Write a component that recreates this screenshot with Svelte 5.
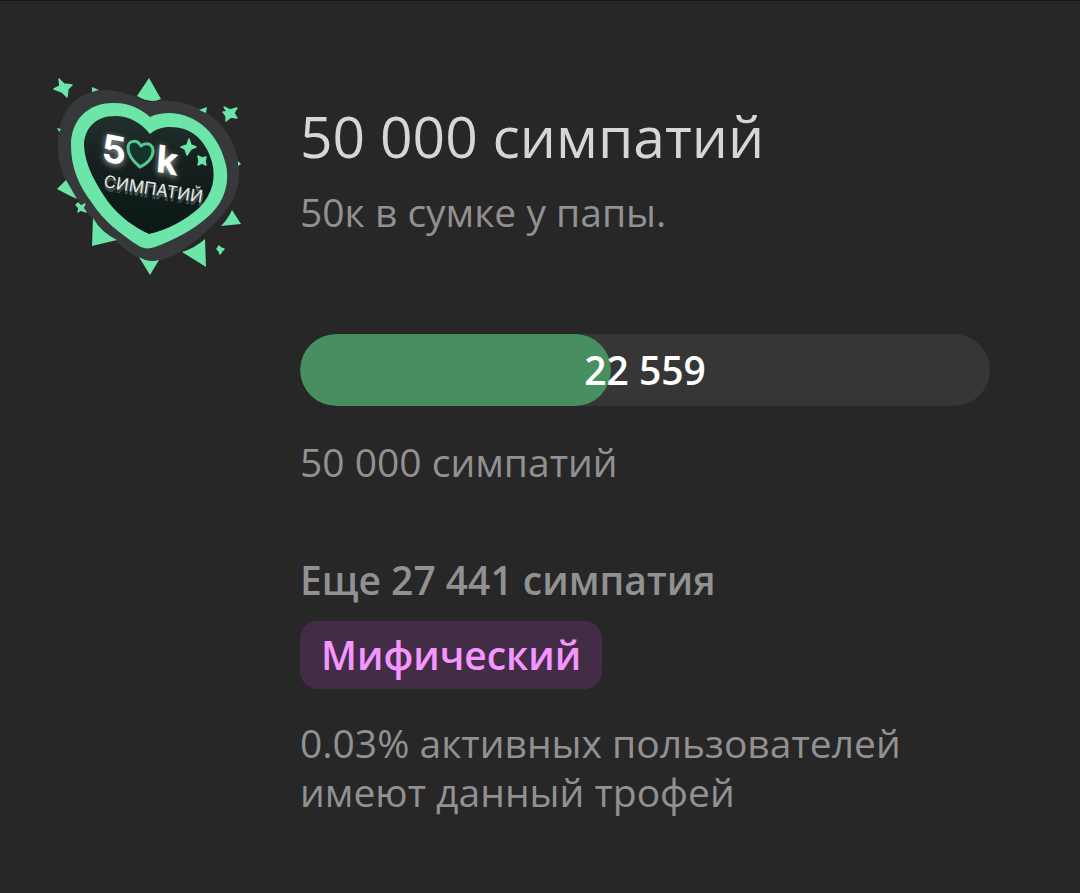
<script>
  const goal = 50000;
  const current = 22559;
  const format = (n) => String(n).replace(/\B(?=(\d{3})+$)/g, '\u00a0');
  const percent = (current / goal) * 100;
</script>

<main class="trophy">
  <svg class="icon" viewBox="50 75 200 200" role="img" aria-label="50k симпатий">
    <defs>
      <linearGradient id="heart-fill" x1="0" y1="0" x2="0" y2="1">
        <stop offset="0" stop-color="#23302c" />
        <stop offset="0.4" stop-color="#16201e" />
        <stop offset="1" stop-color="#0b1816" />
      </linearGradient>
      <filter id="glow" x="-30%" y="-30%" width="160%" height="160%">
        <feGaussianBlur stdDeviation="3" />
      </filter>
    </defs>
    <path
      fill="#36383a"
      d="M58 143C58 112 76 91 105 90C122 90 135 97 148 102C158 100 168 100 178 102C207 107 229 126 237 155C243 181 236 202 218 220C204 234 190 247 174 255C160 262 148 265 138 258C114 242 92 221 78 200C64 182 57 163 58 143Z"
    />
    <path
      fill="#6be5a8"
      d="M150 117C141 109 129 103 115 103C88 102 71 120 71 145C71 168 79 186 92 203C103 220 120 234 139 246C144 249 149 249 155 247C174 240 195 229 210 215C224 202 230 183 226 165C219 134 197 114 170 113C163 113 156 114 150 117Z"
    />
    <path
      fill="url(#heart-fill)"
      d="M150 134C141 123 130 116 115 116C95 116 84 129 84 146C85 165 96 185 109 203C120 217 134 227 149 234C167 230 186 220 200 207C213 193 216 178 212 162C205 138 190 127 170 127C162 127 156 129 150 134Z"
    />
    <g fill="#6be5a8">
      <path d="M92 87L99 90L92 92Z" />
      <path d="M57 128L61 129L59 132Z" />
      <path d="M149 78L161 99Q150 104 137 96Z" />
      <path d="M207 107L206 113L199 110Z" />
      <path d="M238 161L241 164L238 166Z" />
      <path d="M66 180L77 199Q68 195 57 189Z" />
      <path d="M93 218Q101 232 117 240L92 246Z" />
      <path d="M139 257Q149 263 159 260L150 275Z" />
      <path d="M205 239L206 267L182 252Q195 248 205 239Z" />
      <path d="M232 210L241 224L221 226Q228 219 232 210Z" />
      <g stroke="#6be5a8" stroke-width="1.4" stroke-linejoin="round">
        <path d="M59 79L64 84L72 85L68 89L67 97L62 92L54 89L60 86Z" />
        <path d="M224 107L230 110L237 108L234 113L237 118L231 117L226 121L226 116L223 112L227 112Z" />
        <path d="M78 203L81 206L85 204L83 208L86 212L81 210L78 212L79 208L76 205Z" />
        <path d="M219 246L221 248L224 249L222 251L220 254L219 251L217 249Z" />
        <path d="M189 139L191 145L196 147L191 149L187 155L185 149L181 147L187 145Z" />
        <path d="M198 156L202 158L206 157L205 161L206 165L202 163L198 165L199 161Z" />
      </g>
    </g>
    <g class="lettering">
      <g class="haze" filter="url(#glow)" transform="translate(102 161) rotate(4) skewY(7)">
        <text class="number" x="-1" y="2">5</text>
        <text class="number" x="54" y="2">k</text>
      </g>
      <g transform="translate(102 161) rotate(4) skewY(7)">
        <text class="number" x="-1" y="0">5</text>
        <text class="number" x="54" y="0">k</text>
      </g>
      <g transform="translate(103 187) rotate(9)">
        <text class="ghost" x="1" y="3">СИМПАТИЙ</text>
        <text class="word" x="0" y="0">СИМПАТИЙ</text>
      </g>
    </g>
    <path
      d="M141 146C137 139 128 140 128 148C128 156 134 162 140 167C147 164 153 158 153 151C153 143 145 142 141 146Z"
      fill="#14332a"
      stroke="#55c690"
      stroke-width="3"
      stroke-linejoin="round"
    />
  </svg>

  <section class="details">
    <h1>{format(goal)} симпатий</h1>
    <p class="subtitle">50к в сумке у папы.</p>
    <div
      class="bar"
      role="progressbar"
      aria-label="Симпатии"
      aria-valuemin="0"
      aria-valuemax={goal}
      aria-valuenow={current}
    >
      <div class="fill" style="width: {percent}%"></div>
      <span class="value">{format(current)}</span>
    </div>
    <p class="goal">{format(goal)} симпатий</p>
    <p class="left">Еще {format(goal - current)} симпатия</p>
    <span class="rarity">Мифический</span>
    <p class="share">0.03% активных пользователей имеют данный трофей</p>
  </section>
</main>

<style>
  :global(body) {
    margin: 0;
    background: #272727;
  }

  .trophy {
    box-sizing: border-box;
    min-height: 100vh;
    display: flex;
    align-items: flex-start;
    gap: 50px;
    padding: 74px 90px 72px 50px;
    border-top: 1px solid #171717;
    background: #272727;
    color: #919191;
    font: 400 39px/49px "Open Sans", "Noto Sans", sans-serif;
  }

  .icon {
    flex: none;
    width: 200px;
    height: 200px;
    overflow: visible;
  }

  .lettering {
    font-family: Inter, sans-serif;
    fill: #fff;
  }

  .number {
    font-size: 38px;
    font-weight: 700;
  }

  .haze {
    opacity: 0.6;
  }

  .word {
    font-size: 17px;
    fill: #e4e8e7;
  }

  .ghost {
    font-size: 17px;
    fill: none;
    stroke: #4c5755;
    stroke-width: 1px;
  }

  .details {
    flex: 1;
    min-width: 0;
    display: flex;
    flex-direction: column;
    align-items: flex-start;
    padding-top: 26px;
  }

  h1,
  p {
    margin: 0;
  }

  h1 {
    color: #d6d6d6;
    font-size: 57px;
    font-weight: 400;
    line-height: 70px;
  }

  .subtitle {
    margin-top: 16px;
  }

  .bar {
    position: relative;
    align-self: stretch;
    height: 72px;
    margin-top: 98px;
    border-radius: 36px;
    overflow: hidden;
    background: #363636;
  }

  .fill {
    height: 100%;
    border-radius: 36px;
    background: #478e61;
  }

  .value {
    position: absolute;
    inset: 0;
    color: #fff;
    font-weight: 600;
    line-height: 72px;
    text-align: center;
  }

  .goal {
    margin-top: 31px;
  }

  .left {
    margin-top: 69px;
    font-weight: 600;
  }

  .rarity {
    margin-top: 17px;
    padding: 0 21px;
    border-radius: 18px;
    background: #432d46;
    color: #f595ff;
    font-weight: 600;
    line-height: 68px;
  }

  .share {
    margin-top: 29px;
  }
</style>
